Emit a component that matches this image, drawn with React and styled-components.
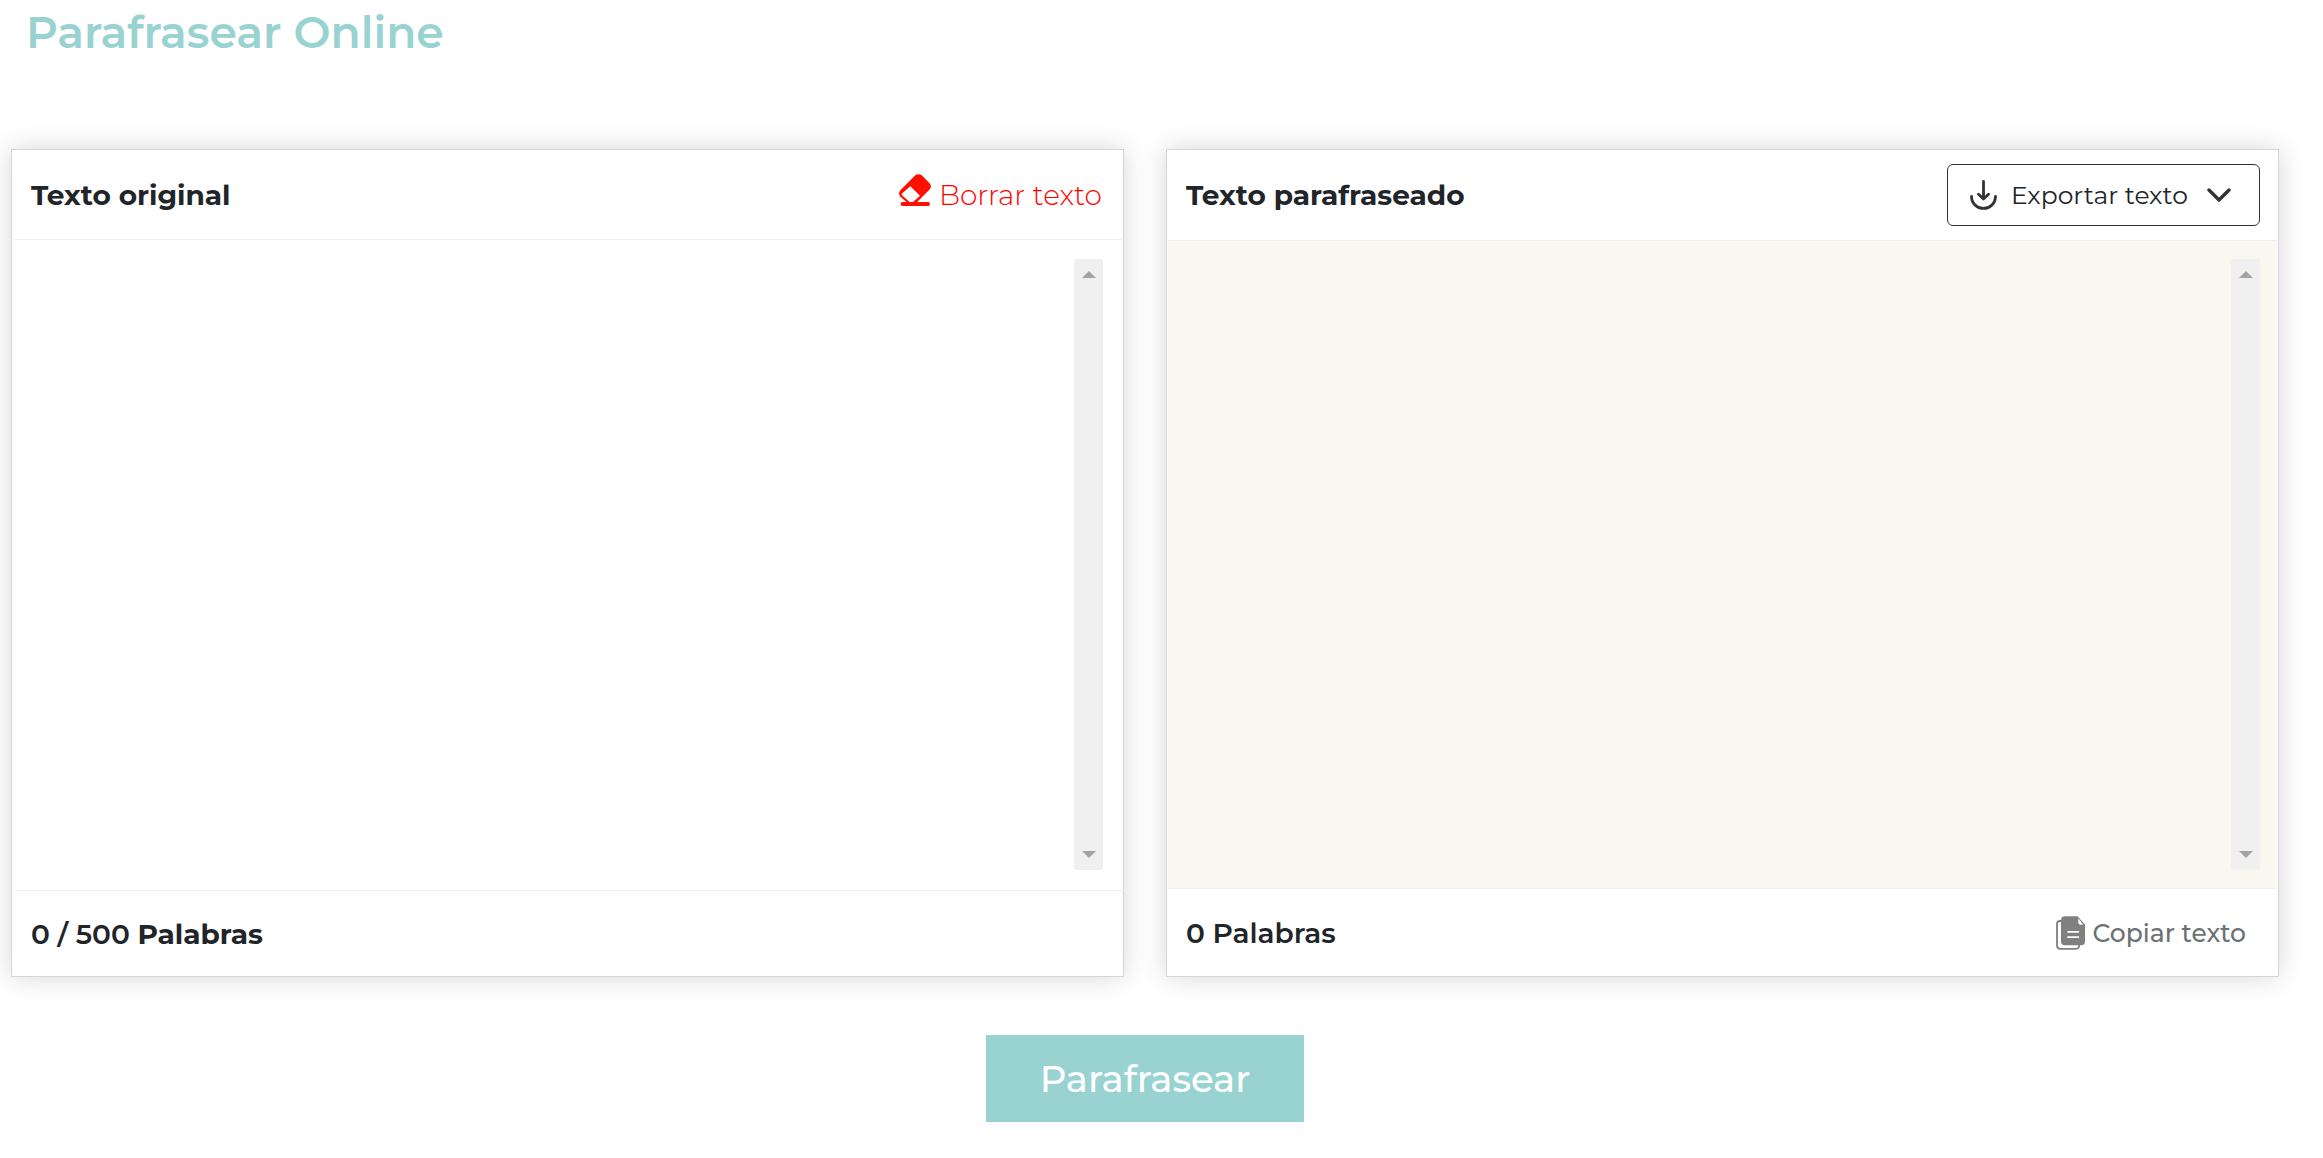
import React, { useState } from 'react';
import styled, { createGlobalStyle } from 'styled-components';

const GlobalStyle = createGlobalStyle`
* {
    box-sizing: border-box;
}
body {
    margin: 0;
    background: #fff;
    color: #212529;
    font-family: Montserrat, Inter, sans-serif;
    font-size: 28px;
    line-height: 36px;
}
button, textarea {
    font-family: inherit;
    line-height: inherit;
    color: inherit;
}
`

const Page = styled.main`
padding: 4px 44px 36px 11px;
`

const Title = styled.h1`
margin: 0 0 89px;
padding-left: 15px;
color: #98d3d2;
font-size: 44px;
font-weight: 600;
line-height: 56px;
`

const Panels = styled.div`
display: grid;
grid-template-columns: 1fr 1fr;
gap: 42px;
`

const Panel = styled.section`
display: flex;
flex-direction: column;
padding: 0 1px;
border: 1px solid #d6d6d6;
box-shadow: 0 0 25px rgba(0, 0, 0, 0.16);
`

const Bar = styled.div`
display: flex;
justify-content: space-between;
align-items: center;
padding: 0 17px 0 18px;
`

const PanelHeader = styled(Bar)`
height: ${({ $tall }) => ($tall ? 91 : 90)}px;
border-bottom: 1px solid #eee;
`

const PanelFooter = styled(Bar)`
height: ${({ $tall }) => ($tall ? 88 : 86)}px;
border-top: 1px solid #eee;
font-weight: 600;
& b {
    font-weight: 700;
}
`

const Heading = styled.h2`
margin: 0;
font-size: 28px;
font-weight: 700;
`

const Editor = styled.div`
flex: 1;
display: flex;
padding: ${({ $tinted }) => ($tinted ? '18px 17px' : '19px 19px 20px')};
background: ${({ $tinted }) => ($tinted ? '#faf7f0' : '#fff')};
`

const TextBox = styled.textarea`
flex: 1;
min-height: 611px;
padding: 0;
border: 0;
outline: 0;
resize: none;
background: transparent;
font-size: 28px;
`

const Track = styled.div`
display: flex;
flex-direction: column;
justify-content: space-between;
align-items: center;
width: 29px;
padding: 12px 0;
border-radius: 2px;
background: #f0f0f0;
`

const Arrow = styled.span`
border: 7px solid transparent;
border-top: ${({ $up }) => ($up ? '0' : '7px solid #a3a3a3')};
border-bottom: ${({ $up }) => ($up ? '7px solid #a3a3a3' : '0')};
`

const PlainButton = styled.button`
display: flex;
align-items: center;
gap: 8px;
padding: 0;
border: 0;
background: transparent;
cursor: pointer;
`

const ClearButton = styled(PlainButton)`
padding-right: 3px;
color: #ff0000;
font-size: 28px;
font-weight: 300;
& svg {
    margin-bottom: 9px;
}
`

const CopyButton = styled(PlainButton)`
padding-right: 14px;
color: #6c7175;
font-size: 25px;
font-weight: 500;
`

const ExportButton = styled(PlainButton)`
width: 313px;
height: 62px;
padding: 0 28px 0 22px;
gap: 14px;
border: 1px solid #333;
border-radius: 6px;
font-size: 25px;
& svg:last-child {
    margin-left: auto;
}
`

const Actions = styled.div`
display: flex;
justify-content: center;
margin-top: 58px;
`

const SubmitButton = styled.button`
width: 318px;
height: 87px;
border: 0;
background: #98d3d2;
color: #fff;
font-size: 37px;
font-weight: 500;
cursor: pointer;
`

const EraserIcon = () => (
    <svg width="32" height="32" viewBox="0 0 32 32" aria-hidden="true">
        <path fill="#ff0f00" fillRule="evenodd" d="M16 1.6Q19.5-1.3 23 1.6L30.6 9.2Q33.3 12.3 30.6 15.6L18.2 28H29A1.7 1.7 0 0 1 29 32H3.5A1.7 1.7 0 0 1 3.5 28H7.5L1.4 22.8Q-1.3 19.5 1.4 16.2ZM11.3 12.2L3 19.5Q2.3 20.4 3 21.3L10.6 28H14L21 21.8Z" />
    </svg>
)

const DownloadIcon = () => (
    <svg width="27" height="30" viewBox="0 0 27 30" fill="none" stroke="#333" strokeWidth="2.8" strokeLinecap="round" strokeLinejoin="round" aria-hidden="true">
        <path d="M13.5 1.5V19M8.5 14.3L13.5 19L18.5 14.3" />
        <path d="M1.5 16.4A12 12 0 0 0 25.5 16.4" />
    </svg>
)

const ChevronIcon = () => (
    <svg width="24" height="14" viewBox="0 0 24 14" fill="none" stroke="#333" strokeWidth="3.4" strokeLinecap="round" strokeLinejoin="round" aria-hidden="true">
        <path d="M2 2L12 12L22 2" />
    </svg>
)

const CopyIcon = () => (
    <svg width="29" height="34" viewBox="0 0 29 34" aria-hidden="true">
        <path d="M5 5H4Q1 5 1 8V29.5Q1 32.8 4.3 32.8H20Q23 32.8 23.3 29" fill="none" stroke="#808080" strokeWidth="1.8" />
        <path d="M9 0.3H21.5L29 8.5V25.5Q29 29.3 25.2 29.3H9Q5 29.3 5 25.5V4Q5 0.3 9 0.3Z" fill="#808080" />
        <path d="M22.3 2.5V6.5Q22.3 8.7 24.5 8.7H27.3Z" fill="#fff" />
        <path d="M12 15.8H22.3M12 21.2H22.3" stroke="#fff" strokeWidth="1.7" strokeLinecap="round" />
    </svg>
)

const ScrollTrack = () => (
    <Track aria-hidden="true">
        <Arrow $up />
        <Arrow />
    </Track>
)

const countWords = (text) => text.split(/\s+/).filter(Boolean).length;

const App = () => {

    const [text, setText] = useState('');
    const [result, setResult] = useState('');

    return (
        <>
        <GlobalStyle />
        <Page>
            <Title>Parafrasear Online</Title>
            <Panels>
                <Panel>
                    <PanelHeader>
                        <Heading id="original">Texto original</Heading>
                        <ClearButton type="button" onClick={() => setText('')}>
                            <EraserIcon />
                            Borrar texto
                        </ClearButton>
                    </PanelHeader>
                    <Editor>
                        <TextBox aria-labelledby="original" value={text} onChange={(e) => setText(e.target.value)} />
                        <ScrollTrack />
                    </Editor>
                    <PanelFooter>
                        <span>{countWords(text)} / 500 <b>Palabras</b></span>
                    </PanelFooter>
                </Panel>

                <Panel>
                    <PanelHeader $tall>
                        <Heading id="result">Texto parafraseado</Heading>
                        <ExportButton type="button" aria-haspopup="menu">
                            <DownloadIcon />
                            Exportar texto
                            <ChevronIcon />
                        </ExportButton>
                    </PanelHeader>
                    <Editor $tinted>
                        <TextBox aria-labelledby="result" value={result} readOnly />
                        <ScrollTrack />
                    </Editor>
                    <PanelFooter $tall>
                        <span>{countWords(result)} Palabras</span>
                        <CopyButton type="button" onClick={() => navigator.clipboard.writeText(result)}>
                            <CopyIcon />
                            Copiar texto
                        </CopyButton>
                    </PanelFooter>
                </Panel>
            </Panels>
            <Actions>
                <SubmitButton type="button" onClick={() => setResult(text)}>Parafrasear</SubmitButton>
            </Actions>
        </Page>
        </>
    )
}

export default App;
